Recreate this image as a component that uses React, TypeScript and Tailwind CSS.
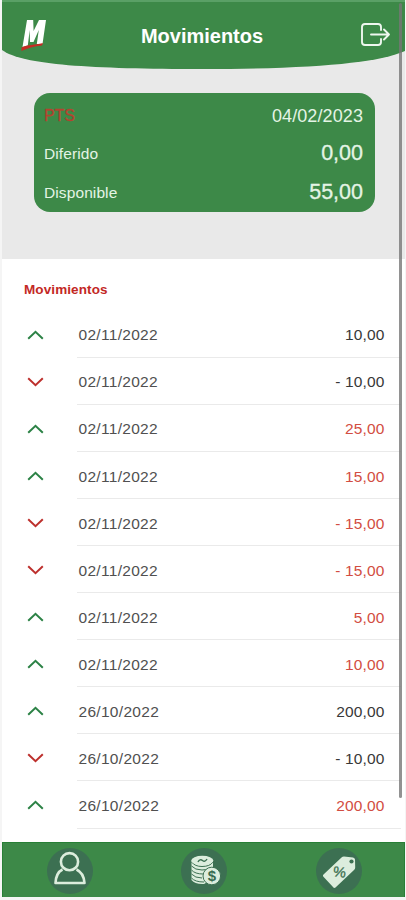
type Movement = {
  date: string;
  amount: string;
  up: boolean;
  highlighted?: boolean;
};

const movements: Movement[] = [
  { date: '02/11/2022', amount: '10,00', up: true },
  { date: '02/11/2022', amount: '- 10,00', up: false },
  { date: '02/11/2022', amount: '25,00', up: true, highlighted: true },
  { date: '02/11/2022', amount: '15,00', up: true, highlighted: true },
  { date: '02/11/2022', amount: '- 15,00', up: false, highlighted: true },
  { date: '02/11/2022', amount: '- 15,00', up: false, highlighted: true },
  { date: '02/11/2022', amount: '5,00', up: true, highlighted: true },
  { date: '02/11/2022', amount: '10,00', up: true, highlighted: true },
  { date: '26/10/2022', amount: '200,00', up: true },
  { date: '26/10/2022', amount: '- 10,00', up: false },
  { date: '26/10/2022', amount: '200,00', up: true, highlighted: true },
];

function Header() {
  return (
    <header className="relative h-[69px] shrink-0">
      {/* Curved background */}
      <svg className="absolute inset-0" width="403" height="69" viewBox="0 0 403 69">
        <path d="M0 0H403V51C376 63 312 69 200 69C90 69 20 65 0 50Z" fill="#3d8948" />
        <path d="M0 1H403" stroke="#5aa066" strokeWidth="2" />
      </svg>
      <div className="relative grid h-[69px] grid-cols-[60px_1fr_63px] items-center">
        <svg className="ml-[19px]" width="26" height="34" viewBox="0 0 26 34">
          <path d="M6 2H12.2L12.6 13L18 2H25L21.5 26H15.8L17.8 12L12.5 24H9L8.7 12L6.8 27.5L1.5 29Z" fill="#fff" />
          <path d="M0.5 29.5C7 26.5 13 27 22 25L21 27.5C13 28.5 7 30 0.5 33Z" fill="#c52c24" />
        </svg>
        <h1 className="pt-[3px] text-center text-[20px] font-bold text-white">Movimientos</h1>
        <svg className="ml-[18px]" width="32" height="26" viewBox="0 0 32 26" fill="none" stroke="#eef7ee" strokeWidth="1.9" strokeLinecap="round" strokeLinejoin="round">
          <path d="M21 8V5Q21 2 18 2H5Q2 2 2 5V20Q2 23 5 23H18Q21 23 21 20V17" />
          <path d="M11 12.5H29M24 7.5L29 12.5L24 17.5" />
        </svg>
      </div>
    </header>
  );
}

function BalanceCard() {
  return (
    <section className="mr-[30px] ml-[32px] mt-[24px] h-[119px] rounded-[16px] bg-[#3d8948] px-[11px] text-[#e4f4e5]">
      <div className="flex h-[46px] items-center justify-between">
        <span className="-ml-px text-[16px] tracking-[-0.1px] text-[#b4432f] [-webkit-text-stroke:0.3px_#b4432f]">PTS</span>
        <span className="mr-px text-[18px] tracking-[0.1px]">04/02/2023</span>
      </div>
      <div className="flex h-[29px] items-center justify-between">
        <span className="-ml-px text-[15.5px] tracking-[0.1px]">Diferido</span>
        <span className="mr-px text-[21.5px] [-webkit-text-stroke:0.3px_#e4f4e5]">0,00</span>
      </div>
      <div className="flex h-[49px] items-center justify-between">
        <span className="-ml-px text-[15.5px] tracking-[0.1px]">Disponible</span>
        <span className="mr-px text-[21.5px] [-webkit-text-stroke:0.3px_#e4f4e5]">55,00</span>
      </div>
    </section>
  );
}

function MovementRow({ movement }: { movement: Movement }) {
  return (
    <li className="flex h-[47.05px]">
      <div className="flex w-[75px] items-center pl-[25px]">
        <svg width="17" height="10" viewBox="0 0 17 10" fill="none" strokeWidth="2" stroke={movement.up ? '#2c8246' : '#bd302d'}>
          <path d={movement.up ? 'M1.2 8.7L8.5 1.8L15.8 8.7' : 'M1.2 1.3L8.5 8.2L15.8 1.3'} />
        </svg>
      </div>
      <div className="mr-[4px] flex flex-1 items-center justify-between border-b border-[#eaeaea] pt-[2px] pr-[16.5px] pl-[1.5px] text-[15.5px] text-[#505050]">
        <span className="tracking-[0.3px]">{movement.date}</span>
        <span className={movement.highlighted ? 'tracking-[0.15px] text-[#d24d42]' : 'tracking-[0.15px] text-[#383838]'}>
          {movement.amount}
        </span>
      </div>
    </li>
  );
}

function PersonIcon() {
  return (
    <svg className="shrink-0" width="48" height="48" viewBox="0 0 48 48" fill="none" stroke="#dceddd" strokeWidth="2.6" strokeLinejoin="round">
      <circle cx="23.5" cy="14.7" r="8.6" />
      <path d="M16.5 22.5C11.5 25 9.8 30 9.5 36H38.5C38 30 36 25 30.5 22.5" />
    </svg>
  );
}

function CoinsIcon() {
  return (
    <svg className="shrink-0" width="48" height="48" viewBox="0 0 48 48">
      <path d="M11.5 14V33Q15 37.5 24 37L33 32V14Z" fill="#dceddd" />
      <path d="M11.5 15Q15 19.5 22 19.5Q30 19.5 33 15M11.5 19Q15 23 22 23Q27 23 31 21M11.5 23Q15 27 23 27M11.5 27Q15 31 22 31M11.5 31Q15 35 24 35" fill="none" stroke="#3c7052" />
      <ellipse cx="22.3" cy="13.5" rx="11" ry="4.7" fill="#dceddd" />
      <path d="M18 15Q20 11.5 22.5 13.5Q25 15.5 27 12" fill="none" stroke="#3c7052" strokeWidth="1.5" />
      <circle cx="31.8" cy="29" r="8.8" fill="#dceddd" stroke="#3c7052" />
      <text x="31.8" y="34.2" textAnchor="middle" fontSize="15" fontWeight="bold" fill="#396b50">$</text>
    </svg>
  );
}

function TagIcon() {
  return (
    <svg className="shrink-0" width="48" height="48" viewBox="0 0 48 48">
      <path d="M8.5 27.5L26.5 10.5Q27.5 9.5 29 9.5L38 10.5Q39.8 11 40 12.5L40.2 20.5Q40.2 22 39 23L20.5 40.5Q19 41.5 18 40L8.2 29.5Q7.5 28.5 8.5 27.5Z" fill="#dceddd" />
      <circle cx="36.5" cy="14.5" r="2.1" fill="#3c7052" />
      <text x="24.5" y="30" textAnchor="middle" fontSize="14.5" fill="#3c7052" stroke="#3c7052" strokeWidth="0.3" transform="rotate(8 24.5 25)">%</text>
    </svg>
  );
}

function BottomNav() {
  return (
    <nav className="ml-0.5 grid h-[55px] w-[403px] shrink-0 grid-cols-[134px_134px_135px] border-x border-t border-[#287f36] bg-[#3d8948]">
      {[PersonIcon, CoinsIcon, TagIcon].map((Icon, index) => (
        <button key={index} className="flex items-center justify-center pt-0.5">
          <span className="flex h-[46px] w-[46px] items-center justify-center rounded-full bg-[#3c7052]">
            <Icon />
          </span>
        </button>
      ))}
    </nav>
  );
}

export default function App() {
  return (
    <div className="relative flex h-[900px] w-[406px] flex-col overflow-hidden bg-[#f5f5f5] font-['Liberation_Sans',sans-serif]">
      <main className="ml-0.5 flex h-[842px] w-[403px] flex-col bg-white">
        <div className="h-[259px] bg-[#e9e9e9]">
          <Header />
          <BalanceCard />
        </div>
        <h2 className="mt-[22px] pl-[22px] text-[13.5px] leading-[18px] font-bold tracking-[0.1px] text-[#c32824]">Movimientos</h2>
        <ul className="mt-[12px]">
          {movements.map((movement, index) => (
            <MovementRow key={index} movement={movement} />
          ))}
        </ul>
      </main>
      <BottomNav />
      {/* Scrollbar */}
      <div className="absolute top-[3px] right-[4px] h-[795px] w-[3px] rounded-full bg-[#777]/80" />
    </div>
  );
}
